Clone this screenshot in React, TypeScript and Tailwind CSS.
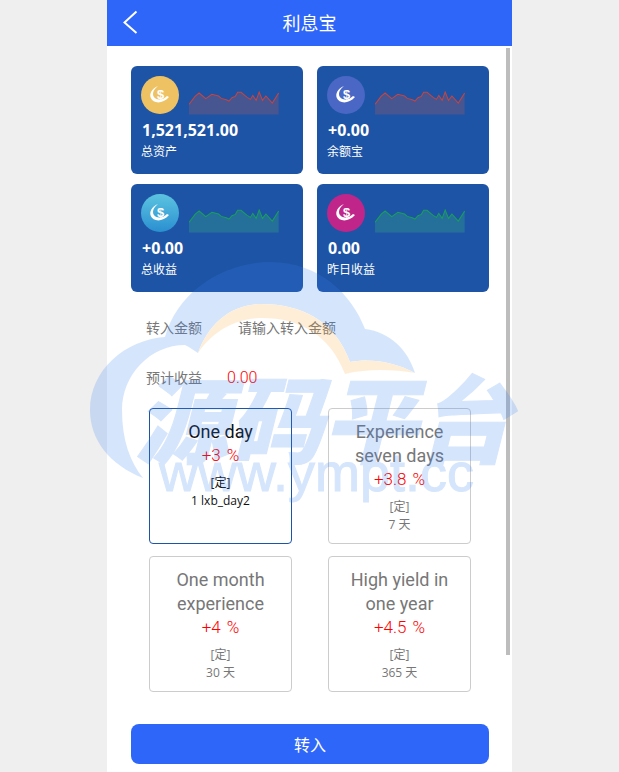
import React from "react";

const SPARK = "247,312 265,288 277,278 297,295 315,282 335,287 343,294 358,298 366,302 375,292 385,288 392,276 402,276 420,291 430,297 437,285 447,300 456,275 466,300 476,287 495,308 514,278";

const stats = [
  { value: "1,521,521.00", label: "总资产", icon: "bg-[#eec263]", line: "#c8443f", fill: "#475590" },
  { value: "+0.00", label: "余额宝", icon: "bg-[#4a67c5]", line: "#c8443f", fill: "#475590" },
  { value: "+0.00", label: "总收益", icon: "bg-gradient-to-b from-[#5cc4e0] to-[#2a8fd0]", line: "#18a058", fill: "#24709a" },
  { value: "0.00", label: "昨日收益", icon: "bg-[#c0268a]", line: "#18a058", fill: "#24709a" },
];

const plans = [
  { title: ["One day"], rate: "+3 %", sub: "1 lxb_day2", active: true },
  { title: ["Experience", "seven days"], rate: "+3.8 %", sub: "7 天", active: false },
  { title: ["One month", "experience"], rate: "+4 %", sub: "30 天", active: false },
  { title: ["High yield in", "one year"], rate: "+4.5 %", sub: "365 天", active: false },
];

function CoinIcon({ className }: { className: string }) {
  return (
    <div className={`w-[38px] h-[38px] rounded-full shrink-0 ${className}`}>
      <svg viewBox="0 0 38 38" className="w-[38px] h-[38px]">
        <path d="M17 10C11 12.5 8 17.5 9.8 22C12 27.5 21.5 28.5 28 21L26 20C21.5 24.8 14.8 24.5 12.6 20.6C11 17 13 13 17 10Z" fill="#fff" />
        <text x="19.5" y="22.5" textAnchor="middle" fontSize="13" fontWeight="700" fill="#fff" fontFamily="Liberation Sans, sans-serif">$</text>
      </svg>
    </div>
  );
}

function Spark({ line, fill }: { line: string; fill: string }) {
  return (
    <svg viewBox="247 272 268 70" className="w-[90px] h-[23.5px] ml-[10px] mt-[15px]">
      <polygon points={`${SPARK} 514,342 247,342`} fill={fill} />
      <polyline points={SPARK} fill="none" stroke={line} strokeWidth="3" />
    </svg>
  );
}

function StatCard({ s }: { s: (typeof stats)[number] }) {
  return (
    <div className="h-[108px] rounded-md bg-[#1e54a5] pt-[10px] pl-[10px] text-white">
      <div className="flex items-start">
        <CoinIcon className={s.icon} />
        <Spark line={s.line} fill={s.fill} />
      </div>
      <div className="mt-[3px] pl-[1px] text-[16px] leading-[24px] font-bold">{s.value}</div>
      <div className="text-[12px] leading-[20px]">{s.label}</div>
    </div>
  );
}

function PlanCard({ p }: { p: (typeof plans)[number] }) {
  return (
    <div className={`h-[136px] w-[143px] rounded border pt-[11px] text-center ${p.active ? "border-[#1e54a5] text-[#111]" : "border-[#ccc] text-[#777]"}`}>
      {p.title.map((t) => (
        <div key={t} className="font-['Roboto','Noto_Sans_CJK_SC',sans-serif] text-[18px] leading-[24px]">{t}</div>
      ))}
      <div className="font-['Roboto',sans-serif] font-light text-[17px] leading-[23px] text-[#f00] [word-spacing:2px]">{p.rate}</div>
      <div className="mt-[7px] text-[12px] leading-[17px]">[定]</div>
      <div className="pt-[1px] text-[12px] leading-[17px]">{p.sub}</div>
    </div>
  );
}

function Watermark() {
  return (
    <div className="absolute inset-0 pointer-events-none opacity-20 overflow-hidden">
      <svg viewBox="0 0 619 772" className="w-[619px] h-[772px]">
        <path fill="#3380f5" d="M143 478C110 465 90 440 90 410C90 370 125 340 165 337C178 290 225 262 270 262C320 262 352 295 365 329C390 332 408 350 415 373C395 362 370 358 350 362C335 320 300 304 262 304C230 304 208 325 198 353C193 350 190 347 185 345C150 345 122 375 122 410C122 440 130 462 143 478Z" />
        <path fill="#fbb040" d="M198 353C208 325 230 304 262 304C300 304 335 320 350 362C370 358 395 362 415 373C395 370 370 368 345 374C330 335 300 318 262 318C235 318 212 332 198 353Z" />
      </svg>
      <div className="absolute left-[135px] top-[360px] whitespace-nowrap italic font-black text-[#3380f5] text-[94px] leading-[110px] [-webkit-text-stroke:1px_#3380f5] font-['Noto_Sans_CJK_SC',sans-serif]">源码平台</div>
      <div className="absolute left-[159px] top-[442px] whitespace-nowrap text-[#3380f5] text-[54px] leading-[60px] [-webkit-text-stroke:1px_#3380f5] font-['Liberation_Sans',sans-serif]">www.ympt.cc</div>
    </div>
  );
}

export default function App() {
  return (
    <div className="relative h-[772px] w-full overflow-hidden bg-[#efefef] font-['Open_Sans','Noto_Sans_CJK_SC',sans-serif]">
      <div className="relative mx-auto h-[772px] w-[405px] bg-white">
        <div className="relative flex h-[46px] items-center justify-center bg-[#2f66fa] text-[18px] text-white">
          <svg viewBox="0 0 16 26" className="absolute left-[16px] top-[10px] h-[26px] w-[16px]" fill="none" stroke="#fff" strokeWidth="2">
            <path d="M13.5 1.5L1.5 12.5L13.5 23" />
          </svg>
          利息宝
        </div>

        <div className="ml-[24px] w-[358px] pt-[20px]">
          <div className="grid grid-cols-[172px_172px] gap-x-[14px] gap-y-[10px]">
            {stats.map((s) => (
              <StatCard key={s.label} s={s} />
            ))}
          </div>

          <div className="mt-[21px] flex h-[28px] items-center pl-[15px] text-[14px] text-[#777]">
            <span className="w-[92px]">转入金额</span>
            <span className="text-[#757575]">请输入转入金额</span>
          </div>
          <div className="mt-[22px] flex h-[28px] items-center pl-[15px] text-[14px] text-[#777]">
            <span className="w-[81px]">预计收益</span>
            <span className="pt-[1px] font-['Roboto',sans-serif] font-light text-[16px] text-[#f00]">0.00</span>
          </div>

          <div className="mt-[17px] ml-[18px] grid grid-cols-[143px_143px] gap-x-[36px] gap-y-[12px]">
            {plans.map((p) => (
              <PlanCard key={p.title[0]} p={p} />
            ))}
          </div>

          <button className="mt-[32px] h-[40px] w-[358px] rounded-lg bg-[#2f66fa] pt-[1px] text-[16px] text-white">转入</button>
        </div>

        <div className="absolute left-[399px] top-[48px] h-[607px] w-[4px] bg-[#bdbdbd]" />
      </div>
      <Watermark />
    </div>
  );
}
